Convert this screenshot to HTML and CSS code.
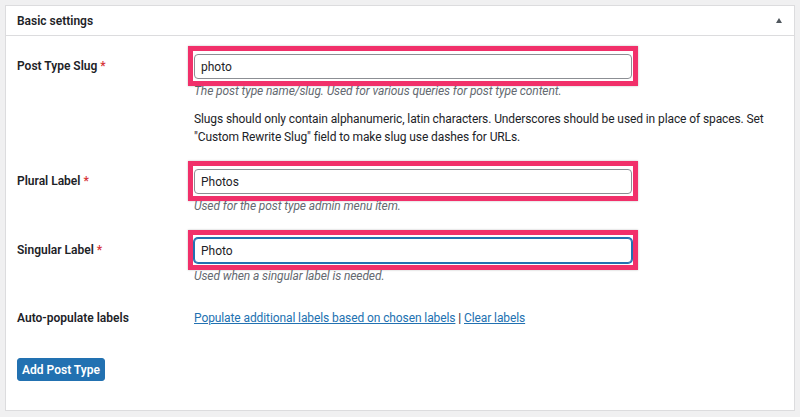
FILE: index.html
```html
<!DOCTYPE html>
<html lang="en">
<head>
  <meta charset="UTF-8" />
  <meta name="viewport" content="width=device-width, initial-scale=1" />
  <title>Basic settings</title>
  <link rel="stylesheet" href="styles.css">
</head>
<body>
  <div class="postbox">
    <div class="postbox-header">
      <h2>Basic settings</h2>
      <span class="toggle-arrow"></span>
    </div>

    <div class="postbox-inside">
      <div class="field-row">
        <label for="name">Post Type Slug <span class="required">*</span></label>
        <div class="field">
          <span class="highlight"><input type="text" id="name" value="photo"></span>
          <p class="description">The post type name/slug. Used for various queries for post type content.</p>
          <p class="note">Slugs should only contain alphanumeric, latin characters. Underscores should be used in place of spaces. Set "Custom Rewrite Slug" field to make slug use dashes for URLs.</p>
        </div>
      </div>

      <div class="field-row">
        <label for="label">Plural Label <span class="required">*</span></label>
        <div class="field">
          <span class="highlight"><input type="text" id="label" value="Photos"></span>
          <p class="description">Used for the post type admin menu item.</p>
        </div>
      </div>

      <div class="field-row singular-row">
        <label for="singular_label">Singular Label <span class="required">*</span></label>
        <div class="field">
          <span class="highlight"><input type="text" id="singular_label" class="focused" value="Photo"></span>
          <p class="description">Used when a singular label is needed.</p>
        </div>
      </div>

      <div class="field-row links-row">
        <label>Auto-populate labels</label>
        <div class="field">
          <a href="#">Populate additional labels based on chosen labels</a> | <a href="#">Clear labels</a>
        </div>
      </div>

      <button class="button-primary">Add Post Type</button>
    </div>
  </div>
</body>
</html>
```

FILE: styles.css
```css
body {
  font-family: Roboto, "Liberation Sans", sans-serif;
  font-size: 12px;
  color: #1d2327;
  background-color: #f0f0f1;
  margin: 0;
  padding: 5px 5px 6px;
}
.postbox {
  background-color: white;
  border: 1px solid #dcdcde;
}
.postbox-header {
  display: flex;
  align-items: center;
  justify-content: space-between;
  height: 29px;
  padding: 0 12px 0 11px;
  border-bottom: 1px solid #dcdcde;
}
.postbox-header h2 {
  margin: 0;
  font-size: 12px;
  font-weight: 600;
}
.toggle-arrow {
  width: 0;
  height: 0;
  border-left: 3px solid transparent;
  border-right: 3px solid transparent;
  border-bottom: 5px solid #50575e;
  margin-top: -1px;
}
.postbox-inside {
  padding: 18px 11px 29px 10px;
}
.field-row {
  display: grid;
  grid-template-columns: 178px 1fr;
  margin-bottom: 23px;
}
.field-row label {
  font-weight: 600;
  line-height: 25px;
  padding-left: 1px;
}
.required {
  color: #d63638;
}
/* pink annotation frame drawn over the input */
.highlight {
  position: relative;
  z-index: 1;
  display: block;
  width: 438px;
  margin: -8px 0 -7px -6px;
  padding: 3px 1px 2px;
  border: 5px solid #f1306a;
  box-shadow: 0 0 2px rgba(0,0,0,0.25);
  background-color: white;
}
.field input {
  display: block;
  box-sizing: border-box;
  width: 438px;
  height: 25px;
  margin: 0;
  padding: 0 6px;
  font-family: inherit;
  font-size: 12px;
  color: #1d2327;
  border: 1px solid #8c8f94;
  border-radius: 4px;
  background-color: white;
  outline: none;
}
.field input.focused {
  border-color: #2271b1;
  box-shadow: 0 0 0 1px #2271b1;
}
.description {
  margin: 3px 0 0;
  line-height: 18px;
  font-style: italic;
  color: #646970;
  letter-spacing: -0.1px;
}
.note {
  margin: 10px 0 0;
  line-height: 18px;
  color: #1d2327;
  letter-spacing: -0.1px;
}
.singular-row {
  margin-top: 1px;
}
.singular-row .description {
  margin-top: 4px;
}
.links-row {
  margin-top: 24px;
  margin-bottom: 31px;
}
.links-row label,
.links-row .field {
  line-height: 18px;
}
.links-row .field {
  letter-spacing: -0.1px;
}
.links-row a {
  color: #2271b1;
}
.button-primary {
  display: block;
  height: 23px;
  width: 88px;
  margin-left: 1px;
  padding: 0;
  font-family: inherit;
  font-size: 12px;
  font-weight: 600;
  color: white;
  background-color: #2271b1;
  border: 1px solid #2271b1;
  border-radius: 3px;
  cursor: pointer;
}
```
